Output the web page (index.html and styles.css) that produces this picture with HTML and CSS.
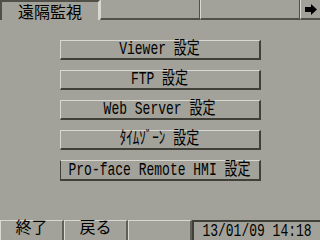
FILE: index.html
```html
<!DOCTYPE html>
<html lang="ja">
<head>
  <meta charset="UTF-8" />
  <title>遠隔監視</title>
  <link rel="stylesheet" href="styles.css">
</head>
<body>
  <div class="screen">

    <!-- Title bar -->
    <div class="titlebar">
      <div class="tab"><span class="jp">遠隔監視</span></div>
      <div class="seg"></div>
      <div class="seg"></div>
      <div class="arrow-btn">
        <svg width="12" height="11" viewBox="0 0 12 11"><path d="M0 3h6V0l6 5.5L6 11V8H0z" fill="#000"/></svg>
      </div>
    </div>

    <!-- Menu -->
    <div class="menu">
      <div class="btn"><span class="lbl">Viewer 設定</span></div>
      <div class="btn"><span class="lbl">FTP 設定</span></div>
      <div class="btn"><span class="lbl">Web Server 設定</span></div>
      <div class="btn"><span class="lbl">ﾀｲﾑｿﾞｰﾝ 設定</span></div>
      <div class="btn wide"><span class="lbl">Pro-face Remote HMI 設定</span></div>
    </div>

    <!-- Footer -->
    <div class="footer">
      <div class="fbtn"><span class="jp">終了</span></div>
      <div class="fbtn"><span class="jp">戻る</span></div>
      <div class="fbtn"></div>
      <div class="clock"><span class="lbl">13/01/09 14:18</span></div>
    </div>

  </div>
</body>
</html>
```

FILE: styles.css
```css
body {
  margin: 0;
  background: #a2a29a;
}

.screen {
  width: 320px;
  height: 240px;
  display: flex;
  flex-direction: column;
  background: #a2a29a;
  color: #000;
  overflow: hidden;
}

.jp {
  display: block;
  font-family: "Noto Sans CJK JP", sans-serif;
  font-size: 16px;
  line-height: 16px;
}

.lbl {
  display: inline-block;
  font-family: "Liberation Mono", "Noto Sans CJK JP", monospace;
  font-size: 13px;
  line-height: 13px;
  transform: scaleY(1.4);
  white-space: pre;
}

/* Title bar */
.titlebar {
  height: 20px;
  flex-shrink: 0;
  display: flex;
}

.tab {
  width: 96px;
  border-top: 2px solid #505048;
  border-left: 2px solid #505048;
  border-right: 2px solid #d8d8d0;
  display: flex;
  align-items: center;
  justify-content: center;
}

.seg {
  width: 98px;
  border-right: 1px solid #505048;
  border-left: 1px solid #d8d8d0;
  border-bottom: 2px solid #505048;
}

.arrow-btn {
  flex: 1;
  border-left: 1px solid #d8d8d0;
  border-bottom: 2px solid #505048;
  display: flex;
  align-items: center;
  justify-content: center;
}

/* Menu */
.menu {
  flex: 1;
  display: flex;
  flex-direction: column;
  align-items: center;
  gap: 10px;
  padding-top: 20px;
}

.btn {
  width: 198px;
  height: 17px;
  flex-shrink: 0;
  border-top: 1px solid #d8d8d0;
  border-left: 1px solid #d8d8d0;
  border-right: 2px solid #404038;
  border-bottom: 2px solid #404038;
  display: flex;
  align-items: center;
  justify-content: center;
}

.btn.wide {
  height: 18px;
  border-left-color: #404038;
}

/* Footer */
.footer {
  height: 20px;
  flex-shrink: 0;
  display: flex;
}

.fbtn {
  width: 61px;
  border-top: 1px solid #d8d8d0;
  border-left: 1px solid #d8d8d0;
  border-right: 2px solid #606058;
  display: flex;
  align-items: flex-start;
  justify-content: center;
}

.fbtn .jp {
  transform: translateY(-3px);
}

.clock {
  flex: 1;
  border-top: 2px solid #404038;
  border-left: 2px solid #404038;
  display: flex;
  align-items: center;
  justify-content: center;
}
```
